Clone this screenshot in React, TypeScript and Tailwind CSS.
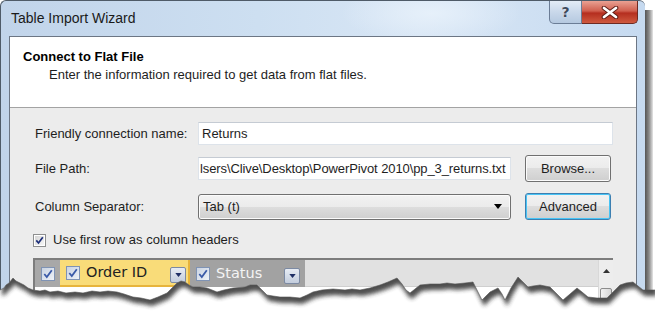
import React from "react";

const edge: [number, number][] = [
  [0, 290], [4, 288], [6, 285], [9, 283], [13, 278], [16, 281], [20, 283], [24, 285], [28, 288], [33, 290], [40, 291], [45, 290], [50, 292], [58, 291], [66, 293], [75, 292], [83, 293], [92, 291], [100, 292], [108, 291], [117, 292], [124, 294], [133, 297], [141, 298], [150, 300], [158, 297], [167, 293], [172, 288], [177, 283], [181, 281], [185, 282], [189, 285], [193, 287], [200, 287], [207, 288], [212, 290], [217, 292], [224, 290], [233, 288], [245, 287], [250, 285], [257, 285], [262, 290], [267, 295], [273, 296], [280, 297], [290, 297], [300, 298], [307, 295], [313, 292], [322, 290], [333, 289], [345, 290], [352, 289], [360, 290], [370, 288], [380, 285], [388, 282], [397, 278], [402, 284], [406, 290], [410, 293], [415, 289], [420, 285], [430, 284], [440, 284], [447, 283], [455, 284], [465, 283], [473, 282], [477, 290], [482, 300], [486, 296], [490, 292], [494, 290], [498, 288], [502, 294], [505, 300], [511, 288], [518, 277], [523, 282], [528, 287], [533, 286], [540, 285], [545, 286], [550, 287], [556, 293], [563, 300], [570, 294], [577, 288], [582, 292], [588, 297], [597, 298], [607, 298], [613, 292], [620, 285], [626, 283], [633, 282], [638, 286], [643, 290], [655, 290],
];

const edgeStr = edge.map(([x, y]) => `${x},${y}`).join(" ");
const lower = `${edgeStr} 655,318 0,318`;
const upper = `0,-50 ${edgeStr} 655,-50`;

function Check({ grid = false }: { grid?: boolean }) {
  return grid ? (
    <span className="inline-flex w-[14px] h-[14px] border border-[#7f93b4] bg-gradient-to-br from-[#c9d3e2] to-[#eef2f8] items-center justify-center shrink-0">
      <svg viewBox="0 0 12 12" className="w-[12px] h-[12px]">
        <path d="M2.3 6 L4.8 9 L9.8 2.2" stroke="#3a5aa8" strokeWidth="1.8" fill="none" />
      </svg>
    </span>
  ) : (
    <span className="inline-flex w-[13px] h-[13px] border border-[#8e8f8f] bg-white p-[1px] shrink-0">
      <span className="flex-1 flex items-center justify-center bg-gradient-to-br from-[#d5d5d5] to-[#f7f7f7]">
        <svg viewBox="0 0 9 9" className="w-[9px] h-[9px]">
          <path d="M1.3 4.4 L3.5 7 L7.8 1.2" stroke="#1d2f7a" strokeWidth="1.7" fill="none" />
        </svg>
      </span>
    </span>
  );
}

function MiniDrop() {
  return (
    <span className="inline-flex w-[16px] h-[16px] rounded-[2px] border border-[#7c8aa3] bg-gradient-to-b from-[#e7ecf4] to-[#c3cddd] items-center justify-center shrink-0">
      <svg viewBox="0 0 8 5" className="w-[7px] h-[4px]">
        <path d="M0 0 L8 0 L4 5 Z" fill="#1f2f66" />
      </svg>
    </span>
  );
}

export default function App() {
  return (
    <div
      className="relative w-[655px] h-[318px] bg-white overflow-hidden text-[#1e1e1e]"
      style={{ fontFamily: '"Liberation Sans", Arial, sans-serif' }}
    >
      <div className="flex h-full">
        {/* window */}
        <div className="w-[645px] h-full flex flex-col border-l border-t border-[#4f5b68] rounded-t-[6px] bg-[radial-gradient(ellipse_90px_30px_at_430px_12px,#e6f0fa_0%,transparent_100%),linear-gradient(90deg,#c1d4ea_0%,#cddff1_40%,#d8e6f5_65%,#c6daf0_100%)]">
          {/* title bar */}
          <div className="h-[35px] flex items-start shrink-0">
            <div className="pl-[10px] h-[35px] flex items-center text-[14px] text-[#1a1a1a]">Table Import Wizard</div>
            <div className="ml-auto mr-[7px] flex h-[23px]">
              <div className="w-[33px] h-[23px] rounded-bl-[5px] border border-t-0 border-[#6b7d96] bg-gradient-to-b from-[#e3ecf6] via-[#c9d8ea] to-[#b5c9e0] flex items-center justify-center">
                <span className="text-[14px] font-bold text-[#3d4a5c] leading-none" style={{ fontFamily: '"DejaVu Sans", sans-serif', textShadow: "0 0 1px #fff" }}>?</span>
              </div>
              <div className="w-[56px] h-[23px] rounded-br-[5px] border border-l-0 border-t-0 border-[#6e2a22] bg-[linear-gradient(180deg,#e9a193_0%,#d0604f_45%,#b52e1f_55%,#cf5a3f_100%)] flex items-center justify-center">
                <svg viewBox="0 0 18 13" className="w-[18px] h-[13px]">
                  <path d="M3 2 L15 11 M15 2 L3 11" stroke="#5a1b14" strokeWidth="4.6" strokeLinecap="round" />
                  <path d="M3 2 L15 11 M15 2 L3 11" stroke="#ffffff" strokeWidth="2.8" strokeLinecap="round" />
                </svg>
              </div>
            </div>
          </div>
          {/* client */}
          <div className="ml-[8px] w-[628px] flex-1 flex flex-col border-l border-t border-r border-[#6c7684] bg-[#ececec]">
            <div className="h-[71px] shrink-0 bg-white border-b border-[#a3a3a3] pl-[13px] pt-[11px]">
              <div className="h-[18px] leading-[18px] text-[13px] font-bold text-black">Connect to Flat File</div>
              <div className="h-[18px] leading-[18px] text-[13px] pl-[26px] text-[#1e1e1e]">Enter the information required to get data from flat files.</div>
            </div>
            <div className="flex-1 flex flex-col pl-[23px] pr-[23px] pt-[14px] text-[13px]">
              {/* row 1 */}
              <div className="h-[23px] flex items-center">
                <div className="w-[165px] pl-[2px] shrink-0">Friendly connection name:</div>
                <div className="flex-1 h-[23px] bg-white border border-[#dde3ea] border-t-[#c5cbd3] flex items-center pl-[3px]">Returns</div>
              </div>
              {/* row 2 */}
              <div className="h-[27px] mt-[10px] flex items-center">
                <div className="w-[165px] pl-[2px] shrink-0">File Path:</div>
                <div className="w-[313px] h-[23px] bg-white border border-[#dde3ea] border-t-[#c5cbd3] flex items-center pl-[1px] whitespace-nowrap tracking-[-0.1px]">
                  lsers\Clive\Desktop\PowerPivot 2010\pp_3_returns.txt
                </div>
                <div className="ml-[14px] w-[86px] h-[27px] rounded-[3px] border border-[#707070] bg-[linear-gradient(180deg,#f2f2f2_0%,#ebebeb_50%,#dddddd_50%,#cfcfcf_100%)] shadow-[inset_0_0_0_1px_#fbfbfb] flex items-center justify-center">
                  Browse...
                </div>
              </div>
              {/* row 3 */}
              <div className="h-[27px] mt-[11px] flex items-center">
                <div className="w-[165px] pl-[2px] shrink-0">Column Separator:</div>
                <div className="w-[313px] h-[26px] rounded-[3px] border border-[#707070] bg-[linear-gradient(180deg,#f2f2f2_0%,#ebebeb_50%,#dddddd_50%,#cfcfcf_100%)] shadow-[inset_0_0_0_1px_#fbfbfb] flex items-center pl-[4px] pr-[8px]">
                  <span>Tab (t)</span>
                  <svg viewBox="0 0 8 5" className="ml-auto w-[8px] h-[5px]">
                    <path d="M0 0 L8 0 L4 5 Z" fill="#000" />
                  </svg>
                </div>
                <div className="ml-[14px] w-[86px] h-[27px] rounded-[3px] border border-[#3c7fb1] bg-[linear-gradient(180deg,#f2f2f2_0%,#ebebeb_50%,#dddddd_50%,#cfcfcf_100%)] shadow-[inset_0_0_0_1px_#48c4f5] flex items-center justify-center">
                  Advanced
                </div>
              </div>
              {/* checkbox */}
              <div className="h-[14px] mt-[13px] flex items-center">
                <Check />
                <span className="ml-[7px]">Use first row as column headers</span>
              </div>
              {/* grid */}
              <div className="mt-[11px] flex-1 flex flex-col border-t-2 border-l-2 border-[#7d7d7d]">
                <div
                  className="h-[27px] flex shrink-0 text-[14.5px]"
                  style={{ fontFamily: '"DejaVu Sans", Verdana, sans-serif' }}
                >
                  <div className="w-[25px] bg-[#a8a8a8] flex items-center justify-center">
                    <Check grid />
                  </div>
                  <div className="w-[130px] bg-[#f9dc79] border-r-2 border-b-2 border-[#e7b43c] flex items-center pl-[6px] pr-[2px]">
                    <Check grid />
                    <span className="ml-[6px] text-[#222]">Order ID</span>
                    <span className="ml-auto"><MiniDrop /></span>
                  </div>
                  <div className="w-[115px] bg-[#a2a2a2] flex items-center pl-[6px] pr-[5px]">
                    <Check grid />
                    <span className="ml-[6px] text-[#f4f4f4]">Status</span>
                    <span className="ml-auto"><MiniDrop /></span>
                  </div>
                  <div className="flex-1 bg-[#e1e1e1] border-b border-[#cfcfcf]" />
                  <div className="w-[15px] bg-[#ededed] border-l border-[#d8d8d8] flex justify-center pt-[9px]">
                    <svg viewBox="0 0 7 4" className="w-[7px] h-[4px]">
                      <path d="M0 4 L7 4 L3.5 0 Z" fill="#333" />
                    </svg>
                  </div>
                </div>
                <div className="flex-1 flex">
                  <div className="flex-1 bg-white" />
                  <div className="w-[15px] bg-[#ededed] border-l border-[#d8d8d8] pt-[1px]">
                    <div className="h-[17px] mx-[1px] rounded-[2px] border border-[#8c8c8c] bg-gradient-to-r from-[#f2f2f2] to-[#d6d6d6]" />
                  </div>
                </div>
              </div>
            </div>
          </div>
        </div>
        {/* window shadow */}
        <div className="w-[8px] mt-[10px] bg-gradient-to-r from-[#555555] via-[#8a8a8a] to-[#e6e6e6]" />
      </div>

      {/* torn paper edge */}
      <svg className="absolute left-0 top-0 pointer-events-none" width="655" height="318" viewBox="0 0 655 318">
        <defs>
          <clipPath id="below">
            <polygon points={lower} />
          </clipPath>
          <filter id="blur" x="-10%" y="-10%" width="120%" height="140%">
            <feGaussianBlur stdDeviation="2.2" />
          </filter>
        </defs>
        <polygon points={lower} fill="#ffffff" />
        <g clipPath="url(#below)">
          <polygon points={upper} fill="#2e2e2e" opacity="0.85" transform="translate(2 6)" filter="url(#blur)" />
        </g>
        <polyline points={edgeStr} fill="none" stroke="#555" strokeWidth="0.6" />
      </svg>
    </div>
  );
}
